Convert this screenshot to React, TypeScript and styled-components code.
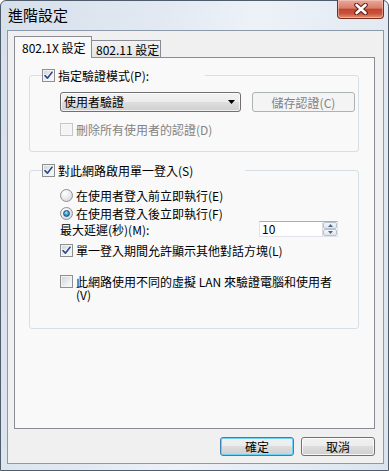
import React from "react";
import styled, { createGlobalStyle, css } from "styled-components";

const GlobalStyle = createGlobalStyle`
  html, body { margin: 0; padding: 0; background: #ffffff; }
  body {
    font-family: "Noto Sans CJK TC", "Noto Sans", sans-serif;
    font-size: 12px;
    color: #000;
  }
  * { box-sizing: border-box; }
`;

const Window = styled.div`
  width: 389px;
  height: 471px;
  border: 1px solid #4f5c6c;
  border-radius: 6px 6px 0 0;
  background: linear-gradient(100deg, #d6e0eb 0%, #e2e9f2 35%, #edf2f8 55%, #dbe4ee 100%);
  padding: 0 4px 6px 6px;
  display: flex;
  flex-direction: column;
`;

const TitleBar = styled.div`
  height: 29px;
  display: flex;
  justify-content: space-between;
  align-items: flex-start;
  padding-left: 1px;
`;

const Title = styled.div`
  font-size: 15px;
  line-height: 18px;
  margin-top: 5px;
  color: #000;
`;

const CloseButton = styled.div`
  width: 47px;
  height: 19px;
  margin-top: -1px;
  border: 1px solid #7a2d23;
  border-top: none;
  border-radius: 0 0 4px 4px;
  background: linear-gradient(
    #e9a99a 0%,
    #d87d6b 45%,
    #c2452f 52%,
    #c9523b 75%,
    #e3946f 100%
  );
  box-shadow: inset 0 0 0 1px rgba(255, 220, 210, 0.45);
  display: flex;
  align-items: center;
  justify-content: center;
`;

const Client = styled.div`
  height: 434px;
  border: 1px solid #8c99a8;
  background: #f0f0f0;
  padding: 5px 8px 7px 6px;
  display: flex;
  flex-direction: column;
`;

const TabStrip = styled.div`
  height: 21px;
  display: flex;
  align-items: flex-end;
`;

const Tab = styled.div<{ $active?: boolean }>`
  border: 1px solid #898c95;
  border-bottom: none;
  white-space: nowrap;
  ${(p) =>
    p.$active
      ? css`
          width: 78px;
          height: 22px;
          margin-bottom: -1px;
          position: relative;
          z-index: 1;
          background: #f9f9f9;
          padding: 3px 0 0 7px;
          line-height: 15px;
        `
      : css`
          width: 69px;
          height: 17px;
          border-left: none;
          background: linear-gradient(#f3f3f3, #e3e3e3);
          padding: 1px 0 0 4px;
          line-height: 15px;
        `}
`;

const Panel = styled.div`
  height: 372px;
  border: 1px solid #898c95;
  background: #f9f9f9;
  padding: 11px 0 0 14px;
`;

const Group = styled.fieldset<{ $gap?: number }>`
  width: 330px;
  min-width: 0;
  margin: ${(p) => p.$gap ?? 0}px 0 0 0;
  padding: 0 0 ${(p) => (p.$gap ? 27 : 15)}px 12px;
  border: 1px solid #d5dfe5;
  border-radius: 3px;
`;

const Legend = styled.legend<{ $w: number }>`
  width: ${(p) => p.$w}px;
  height: 13px;
  padding: 0;
  margin: 0;
  display: flex;
  align-items: center;
  gap: 3px;
  line-height: 13px;
  white-space: nowrap;
`;

const GroupBody = styled.div<{ $top: number }>`
  padding: ${(p) => p.$top}px 0 0 18px;
  display: flex;
  flex-direction: column;
  align-items: flex-start;
`;

const Row = styled.div<{ $mt?: number }>`
  display: flex;
  align-items: flex-start;
  gap: 3px;
  margin-top: ${(p) => p.$mt ?? 0}px;
  line-height: 13px;
`;

const CenterRow = styled.div<{ $mt?: number }>`
  display: flex;
  align-items: center;
  margin-top: ${(p) => p.$mt ?? 0}px;
`;

const Label = styled.span<{ $disabled?: boolean; $w?: number }>`
  line-height: 13px;
  color: ${(p) => (p.$disabled ? "#838383" : "#000")};
  ${(p) =>
    p.$w
      ? css`
          width: ${p.$w}px;
        `
      : css`
          white-space: nowrap;
        `}
`;

const CheckBox = styled.span<{ $disabled?: boolean }>`
  flex: 0 0 13px;
  width: 13px;
  height: 13px;
  border: 1px solid ${(p) => (p.$disabled ? "#c4c6c8" : "#8e8f8f")};
  background: ${(p) =>
    p.$disabled ? "#f4f4f4" : "linear-gradient(135deg, #cdd2d8 0%, #eceef0 60%, #fbfbfb 100%)"};
  box-shadow: inset 0 0 0 1px ${(p) => (p.$disabled ? "#f7f7f7" : "#f2f3f4")};
  display: flex;
  align-items: center;
  justify-content: center;
`;

const RadioBox = styled.span`
  flex: 0 0 13px;
  width: 13px;
  height: 13px;
  border-radius: 50%;
  border: 1px solid #8e8f8f;
  background: radial-gradient(circle at 35% 30%, #ffffff 0%, #e9eaec 50%, #c9ccd1 100%);
  display: flex;
  align-items: center;
  justify-content: center;
`;

const RadioDot = styled.span`
  width: 7px;
  height: 7px;
  border-radius: 50%;
  border: 1px solid #17507f;
  background: radial-gradient(circle at 45% 35%, #b8ecff 0%, #3fa9e3 40%, #125f9c 100%);
`;

const Dropdown = styled.div`
  width: 181px;
  height: 20px;
  border: 1px solid #707070;
  border-radius: 3px;
  background: linear-gradient(#f3f3f3 0%, #ececec 50%, #dedede 50%, #d0d0d0 100%);
  box-shadow: inset 0 0 0 1px rgba(255, 255, 255, 0.7);
  display: flex;
  align-items: center;
  justify-content: space-between;
  padding: 0 5px 0 3px;
  line-height: 16px;
`;

const PushButton = styled.div<{ $w: number; $variant?: "default" | "disabled" | "normal"; $ml?: number }>`
  width: ${(p) => p.$w}px;
  height: ${(p) => (p.$variant === "disabled" ? 20 : 19)}px;
  margin-left: ${(p) => p.$ml ?? 0}px;
  border-radius: 3px;
  display: flex;
  align-items: center;
  justify-content: center;
  line-height: 15px;
  ${(p) =>
    p.$variant === "disabled"
      ? css`
          border: 1px solid #adb2b5;
          background: #f4f4f4;
          color: #838383;
        `
      : p.$variant === "default"
      ? css`
          border: 1px solid #3c7fb1;
          background: linear-gradient(#f2f2f2 0%, #ebebeb 50%, #dddddd 50%, #cfcfcf 100%);
          box-shadow: inset 0 0 0 1px #6fd1f5;
        `
      : css`
          border: 1px solid #707070;
          background: linear-gradient(#f2f2f2 0%, #ebebeb 50%, #dddddd 50%, #cfcfcf 100%);
          box-shadow: inset 0 0 0 1px rgba(255, 255, 255, 0.8);
        `}
`;

const DelayLabel = styled.div`
  width: 199px;
  flex: none;
  line-height: 13px;
  white-space: nowrap;
`;

const SpinBox = styled.div`
  width: 79px;
  height: 16px;
  border: 1px solid #e2e3ea;
  border-top-color: #abadb3;
  background: #fff;
  display: flex;
  align-items: stretch;
`;

const SpinText = styled.div`
  flex: 1;
  padding-left: 2px;
  line-height: 14px;
`;

const SpinButtons = styled.div`
  width: 15px;
  display: flex;
  flex-direction: column;
  border-left: 1px solid #d6dbe2;
`;

const SpinHalf = styled.div`
  flex: 1;
  display: flex;
  align-items: center;
  justify-content: center;
  background: linear-gradient(#f4f6f9, #dfe6ee);
  border: 1px solid #b9c3cf;
  border-radius: 2px;
`;

const ButtonRow = styled.div`
  margin-top: 8px;
  display: flex;
  justify-content: flex-end;
  gap: 7px;
`;

const CheckMark = () => (
  <svg width="9" height="9" viewBox="0 0 9 9">
    <path d="M1 4.6 L3.4 7.2 L8 1.2" fill="none" stroke="#ffffff" strokeWidth="3" strokeLinecap="round" strokeLinejoin="round" />
    <path d="M1 4.6 L3.4 7.2 L8 1.2" fill="none" stroke="#2f4a86" strokeWidth="1.7" strokeLinecap="round" strokeLinejoin="round" />
  </svg>
);

const Check: React.FC<{ checked?: boolean; disabled?: boolean }> = ({ checked, disabled }) => (
  <CheckBox $disabled={disabled}>{checked ? <CheckMark /> : null}</CheckBox>
);

const Radio: React.FC<{ checked?: boolean }> = ({ checked }) => (
  <RadioBox>{checked ? <RadioDot /> : null}</RadioBox>
);

const CloseX = () => (
  <svg width="14" height="12" viewBox="0 0 14 12">
    <path d="M2.5 2 L11.5 10 M11.5 2 L2.5 10" stroke="#5e1d16" strokeWidth="4.6" strokeLinecap="round" />
    <path d="M2.5 2 L11.5 10 M11.5 2 L2.5 10" stroke="#ffffff" strokeWidth="2.6" strokeLinecap="round" />
  </svg>
);

const DownArrow = () => (
  <svg width="7" height="4" viewBox="0 0 7 4">
    <path d="M0 0 H7 L3.5 4 Z" fill="#000" />
  </svg>
);

const SmallArrow: React.FC<{ up?: boolean }> = ({ up }) => (
  <svg width="5" height="3" viewBox="0 0 5 3">
    <path d={up ? "M0 3 H5 L2.5 0 Z" : "M0 0 H5 L2.5 3 Z"} fill="#4b6a90" />
  </svg>
);

export default function App() {
  return (
    <>
      <GlobalStyle />
      <Window>
        <TitleBar>
          <Title>進階設定</Title>
          <CloseButton>
            <CloseX />
          </CloseButton>
        </TitleBar>
        <Client>
          <TabStrip>
            <Tab $active>802.1X 設定</Tab>
            <Tab>802.11 設定</Tab>
          </TabStrip>
          <Panel>
            <Group>
              <Legend $w={163}>
                <Check checked />
                <Label>指定驗證模式(P):</Label>
              </Legend>
              <GroupBody $top={10}>
                <CenterRow>
                  <Dropdown>
                    <span>使用者驗證</span>
                    <DownArrow />
                  </Dropdown>
                  <PushButton $w={103} $variant="disabled" $ml={11}>
                    儲存認證(C)
                  </PushButton>
                </CenterRow>
                <Row $mt={11}>
                  <Check disabled />
                  <Label $disabled>刪除所有使用者的認證(D)</Label>
                </Row>
              </GroupBody>
            </Group>
            <Group $gap={12}>
              <Legend $w={203}>
                <Check checked />
                <Label>對此網路啟用單一登入(S)</Label>
              </Legend>
              <GroupBody $top={12}>
                <Row>
                  <Radio />
                  <Label>在使用者登入前立即執行(E)</Label>
                </Row>
                <Row $mt={5}>
                  <Radio checked />
                  <Label>在使用者登入後立即執行(F)</Label>
                </Row>
                <CenterRow $mt={1}>
                  <DelayLabel>最大延遲(秒)(M):</DelayLabel>
                  <SpinBox>
                    <SpinText>10</SpinText>
                    <SpinButtons>
                      <SpinHalf>
                        <SmallArrow up />
                      </SpinHalf>
                      <SpinHalf>
                        <SmallArrow />
                      </SpinHalf>
                    </SpinButtons>
                  </SpinBox>
                </CenterRow>
                <Row $mt={7}>
                  <Check checked />
                  <Label>單一登入期間允許顯示其他對話方塊(L)</Label>
                </Row>
                <Row $mt={18}>
                  <Check />
                  <Label $w={265}>此網路使用不同的虛擬 LAN 來驗證電腦和使用者(V)</Label>
                </Row>
              </GroupBody>
            </Group>
          </Panel>
          <ButtonRow>
            <PushButton $w={74} $variant="default">確定</PushButton>
            <PushButton $w={74}>取消</PushButton>
          </ButtonRow>
        </Client>
      </Window>
    </>
  );
}
